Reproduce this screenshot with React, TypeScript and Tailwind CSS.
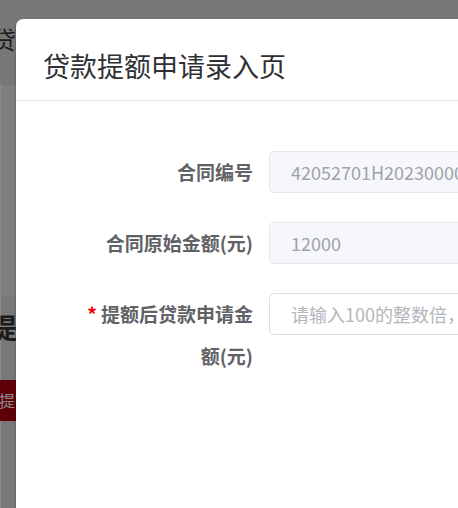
import React from 'react';

const font = { fontFamily: '"Noto Sans CJK SC", "Noto Sans", sans-serif' };

function Row({ label, required, value, placeholder, disabled }: { label: string; required?: boolean; value?: string; placeholder?: string; disabled?: boolean }) {
  return (
    <div className="flex items-start">
      <div className="w-[182px] shrink-0 pr-[16px] text-right text-[19px] leading-[42px] font-bold text-[#606266]">
        {required && <span className="mr-[4px] text-[#f40000]">*</span>}
        {label}
      </div>
      <div
        className={
          disabled
            ? 'flex-1 h-[42px] rounded-[5px] border border-[#e4e7ed] bg-[#f5f7fa] px-[21px] text-[18px] leading-[40px] text-[#a0a3a9] whitespace-nowrap overflow-hidden'
            : 'flex-1 h-[42px] rounded-[5px] border border-[#dcdfe6] bg-white px-[21px] text-[18px] leading-[40px] text-[#b3b6bc] whitespace-nowrap overflow-hidden'
        }
      >
        {value ?? placeholder}
      </div>
    </div>
  );
}

export default function App() {
  return (
    <div className="relative w-[458px] h-[508px] overflow-hidden bg-[#7d7e7d]" style={font}>
      {/* page under the mask */}
      <div className="flex flex-col border-l border-[#8a8b8a]">
        <div className="h-[85px] bg-[#767776] pt-[24px] -ml-[9px] text-[24px] leading-[30px] text-[#1c1c1c] whitespace-nowrap overflow-hidden">贷款</div>
        <div className="h-[211px] bg-[#7d7e7d]" />
        <div className="h-[212px] bg-[#777877] flex flex-col">
          <div className="pt-[13px] -ml-[12px] text-[28px] leading-[36px] font-bold text-[#1c1c1c] whitespace-nowrap overflow-hidden">提额</div>
          <div className="mt-[35px] h-[41px] w-[60px] -ml-[4px] bg-[#5f0008] pl-[2px] text-[16px] leading-[41px] text-[#8c8c8c] overflow-hidden">提额</div>
        </div>
      </div>

      {/* dialog */}
      <div className="absolute left-[16px] top-[19px] w-[720px] h-[600px] rounded-tl-[7px] bg-white shadow-[-1px_0_2px_rgba(0,0,0,0.15)]">
        <div className="pl-[27px] pt-[32px] pb-[19px] border-b border-[#dfe2e9]">
          <h1 className="text-[27px] leading-[30px] font-normal text-[#303133]">贷款提额申请录入页</h1>
        </div>
        <div className="pl-[71px] pt-[50px] w-[560px] flex flex-col gap-[29px]">
          <Row label="合同编号" value="42052701H20230000012" disabled />
          <Row label="合同原始金额(元)" value="12000" disabled />
          <Row label="提额后贷款申请金额(元)" required placeholder="请输入100的整数倍，" />
        </div>
      </div>
    </div>
  );
}
